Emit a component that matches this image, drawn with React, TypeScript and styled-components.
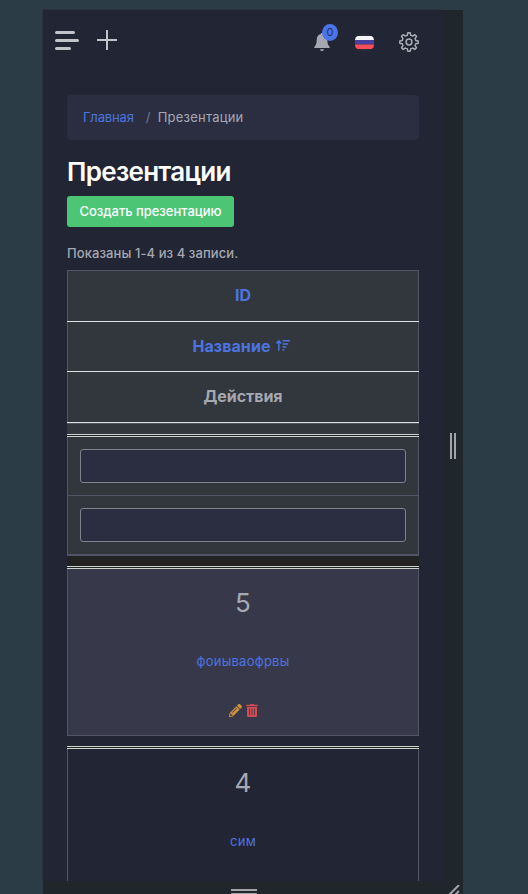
import React from "react";
import styled, { createGlobalStyle, css } from "styled-components";
import { FaPencilAlt } from "react-icons/fa";

const Global = createGlobalStyle`
  * { box-sizing: border-box; }
  html, body { margin: 0; height: 100%; overflow: hidden; background: #2c3c46; }
  body { font-family: Inter, "Open Sans", sans-serif; color: #a5a8b1; font-size: 13px; }
`;

const Stage = styled.div`
  width: 528px;
  height: 894px;
  padding: 10px 0 0 43px;
  overflow: hidden;
  background: #2c3c46;
`;

const Device = styled.div`
  display: grid;
  grid-template: 871px 13px / 400px 20px;
  width: 420px;
`;

const Screen = styled.main`
  overflow: hidden;
  background: #222533;
  box-shadow: 0 0 0 1px #2c3239;
  clip-path: inset(-1px 0 0 -1px);
`;

const SideRail = styled.div`
  display: flex;
  align-items: center;
  justify-content: center;
  background: #1f262c;
`;

const BottomRail = styled.div`
  display: flex;
  justify-content: center;
  padding: 8px 0 0 2px;
  background: #1f262c;
`;

const Corner = styled.div`
  display: flex;
  justify-content: flex-end;
  align-items: flex-end;
  background: #1f262c;
  padding-right: 3px;
`;

const Grip = styled.span<{ $vertical?: boolean }>`
  ${({ $vertical }) =>
    $vertical
      ? css`
          width: 6px;
          height: 26px;
          border-width: 0 2px;
        `
      : css`
          width: 26px;
          height: 6px;
          border-width: 2px 0;
        `}
  border-style: solid;
  border-color: #a4a4a8;
`;

const TopBar = styled.header`
  display: flex;
  align-items: flex-start;
  justify-content: space-between;
  height: 62px;
  padding: 0 24px 0 12px;
`;

const Tools = styled.div<{ $gap: number; $top: number }>`
  display: flex;
  align-items: center;
  gap: ${({ $gap }) => $gap}px;
  padding-top: ${({ $top }) => $top}px;
`;

const BellWrap = styled.span`
  position: relative;
  width: 16px;
  height: 18px;
`;

const Badge = styled.span`
  position: absolute;
  left: 8px;
  top: -9px;
  width: 16px;
  height: 17px;
  border-radius: 50%;
  background: #4c74e6;
  color: #263155;
  font-size: 11px;
  line-height: 17px;
  text-align: center;
`;

const Content = styled.section`
  padding: 23px 24px 0;
`;

const Breadcrumb = styled.nav`
  display: flex;
  align-items: center;
  height: 45px;
  padding: 0 16px 1px;
  border-radius: 4px;
  background: #2b2e41;
  font-size: 13px;
  letter-spacing: 0.22px;
`;

const Slash = styled.span`
  margin: 0 7px 0 12px;
  color: #757987;
`;

const Link = styled.a`
  color: #4c74e0;
`;

const HomeLink = styled(Link)`
  letter-spacing: -0.15px;
`;

const Title = styled.h1`
  margin: 16px 0 8px;
  height: 32px;
  line-height: 32px;
  font-size: 26px;
  font-weight: 600;
  letter-spacing: -0.7px;
  color: #fff;
  white-space: nowrap;
`;

const CreateButton = styled.button`
  display: block;
  width: 167px;
  height: 31px;
  padding: 0 0 1px;
  border: 0;
  border-radius: 3px;
  background: #4cc575;
  color: #fff;
  font: 500 13px Inter, sans-serif;
  letter-spacing: -0.04px;
  white-space: nowrap;
`;

const Summary = styled.p`
  margin: 17px 0 7px;
  height: 19px;
  line-height: 19px;
  font-weight: 500;
  letter-spacing: 0.08px;
`;

const Table = styled.div`
  display: flex;
  flex-direction: column;
`;

const HeadGroup = styled.div`
  height: 154px;
  border: 1px solid #525566;
  background: #32363d;
`;

const HeadCell = styled.div<{ $height: number; $link?: boolean }>`
  display: flex;
  align-items: center;
  justify-content: center;
  gap: 5px;
  height: ${({ $height }) => $height}px;
  margin: 0 -1px;
  padding-bottom: 2px;
  border-bottom: 1px solid #dfe2e2;
  color: ${({ $link }) => ($link ? "#4c74e0" : "#a5a8b1")};
  font-size: 16px;
  font-weight: 700;
  letter-spacing: -0.05px;
`;

const SortedCell = styled(HeadCell)`
  padding-right: 4px;
  letter-spacing: 0.06px;
`;

const Gap = styled.div<{ $tone: string }>`
  height: 10px;
  background: ${({ $tone }) => $tone};
`;

const DoubleRule = styled.div`
  height: 3px;
  border: solid #cdd2cc;
  border-width: 1px 0;
  background: #1f2428;
`;

const FilterGroup = styled.div`
  height: 119px;
  border: solid #525566;
  border-width: 0 1px 2px;
  background: #32363d;
`;

const FilterRow = styled.div<{ $last?: boolean }>`
  padding: 12px;
  height: ${({ $last }) => ($last ? 58 : 59)}px;
  border-bottom: ${({ $last }) => ($last ? 0 : 1)}px solid #525566;
`;

const FilterInput = styled.input`
  display: block;
  width: 326px;
  height: 34px;
  border: 1px solid #80838b;
  border-radius: 3px;
  background: #2b2e41;
`;

const Record = styled.article<{ $striped?: boolean }>`
  display: flex;
  flex-direction: column;
  align-items: center;
  height: 167px;
  border: solid #525566;
  border-width: 0 1px 1px;
  background: ${({ $striped }) => ($striped ? "#37394b" : "#222533")};
`;

const RecordId = styled.div`
  height: 68px;
  line-height: 68px;
  font-size: 26px;
`;

const RecordName = styled(Link)`
  height: 49px;
  line-height: 49px;
  font-size: 13px;
  letter-spacing: 0.25px;
`;

const Actions = styled.div`
  display: flex;
  align-items: center;
  gap: 4px;
  height: 48px;
`;

function MenuIcon() {
  return (
    <svg width="24" height="20" viewBox="0 0 24 20" stroke="#c3c4c9" strokeWidth="3" strokeLinecap="round">
      <path d="M1.5 2.5h17M1.5 10.5h21M1.5 18.5h13" />
    </svg>
  );
}

function PlusIcon() {
  return (
    <svg width="20" height="20" viewBox="0 0 20 20" stroke="#c3c4c9" strokeWidth="2">
      <path d="M10 0v20M0 10h20" />
    </svg>
  );
}

function BellIcon() {
  return (
    <svg width="16" height="18" viewBox="0 0 16 18" fill="#a5a8b1">
      <path d="M8 0c-.7 0-1.2.5-1.2 1.1C4 1.7 2.8 4 2.7 7c-.1 3.600-.8 5.300-2.200 6.800-.5.600-.3 1.300.5 1.300h14c.8 0 1-.7.500-1.300C14.100 12.300 13.400 10.600 13.300 7c-.1-3-1.300-5.300-4.100-5.900C9.200.5 8.700 0 8 0zM6 16.200h4c0 1-.9 1.800-2 1.800s-2-.8-2-1.800z" />
    </svg>
  );
}

function FlagIcon() {
  return (
    <svg width="19" height="19" viewBox="0 0 19 19">
      <circle cx="9.500" cy="9.500" r="9.500" fill="#2a2c3d" />
      <path d="M2.500 3h14Q19 4 19 7H0Q0 4 2.500 3z" fill="#f4f3f5" />
      <path d="M0 7h19v4.500H0z" fill="#49409e" />
      <path d="M0 11.500h19Q19 15 16.500 16h-14Q0 15 0 11.500z" fill="#fa4d57" />
    </svg>
  );
}

function GearIcon() {
  return (
    <svg width="20" height="20" viewBox="0 0 20 20" fill="none" stroke="#a9acb4" strokeWidth="1.500" strokeLinejoin="round">
      <circle cx="10" cy="10" r="2.900" />
      <path d="M8.800.8h2.400l.5 2.500q1 .2 1.900.8l2.200-1.400 1.700 1.700-1.500 2.200q.6.900.8 1.900l2.400.4v2.300l-2.400.5q-.2 1-.8 1.900l1.500 2.100-1.700 1.700-2.200-1.400q-.9.600-1.900.8l-.5 2.400H8.800l-.5-2.400q-1-.2-1.900-.8l-2.200 1.400-1.700-1.700L4 13.600q-.6-.9-.8-1.900L.8 11.200V8.900l2.400-.4q.2-1 .8-1.900L2.500 4.400l1.700-1.700 2.200 1.400q.9-.6 1.900-.8z" />
    </svg>
  );
}

function SortIcon() {
  return (
    <svg width="14" height="13" viewBox="0 0 15 13" fill="none" stroke="#4c74e0" strokeWidth="1.600">
      <path d="M3 12V2M.5 4.300L3 1.500l2.500 2.800M7 1.500h8M7 4.800h6M7 8h4M7 11.300h2" />
    </svg>
  );
}

function TrashIcon() {
  return (
    <svg width="12" height="13" viewBox="0 0 12 13" fill="#d34b50">
      <path d="M.3.800h3.500L4.500 0h3l.7.800h3.500v1.500H.3z" />
      <path fillRule="evenodd" d="M1 3h10v8.800q0 1.200-1.200 1.200H2.200Q1 13 1 11.800zM3.200 4.500V11h.8V4.500zM5.600 4.500V11h.8V4.500zM8 4.500V11h.8V4.500z" />
    </svg>
  );
}

function ResizeIcon() {
  return (
    <svg width="14" height="9" viewBox="0 0 14 9" stroke="#a4a4a8" strokeWidth="2">
      <path d="M3 10L13 0M9 10l4-4" />
    </svg>
  );
}

export default function App() {
  return (
    <>
      <Global />
      <Stage>
        <Device>
          <Screen>
            <TopBar>
              <Tools $gap={18} $top={20}>
                <MenuIcon />
                <PlusIcon />
              </Tools>
              <Tools $gap={25} $top={22}>
                <BellWrap>
                  <BellIcon />
                  <Badge>0</Badge>
                </BellWrap>
                <FlagIcon />
                <GearIcon />
              </Tools>
            </TopBar>
            <Content>
              <Breadcrumb>
                <HomeLink>Главная</HomeLink>
                <Slash>/</Slash>
                <span>Презентации</span>
              </Breadcrumb>
              <Title>Презентации</Title>
              <CreateButton>Создать презентацию</CreateButton>
              <Summary>Показаны 1-4 из 4 записи.</Summary>
              <Table>
                <HeadGroup>
                  <HeadCell $height={51} $link>ID</HeadCell>
                  <SortedCell $height={50} $link>
                    Название <SortIcon />
                  </SortedCell>
                  <HeadCell $height={51}>Действия</HeadCell>
                </HeadGroup>
                <Gap $tone="#32363d" />
                <DoubleRule />
                <FilterGroup>
                  <FilterRow>
                    <FilterInput />
                  </FilterRow>
                  <FilterRow $last>
                    <FilterInput />
                  </FilterRow>
                </FilterGroup>
                <Gap $tone="#222222" />
                <DoubleRule />
                <Record $striped>
                  <RecordId>5</RecordId>
                  <RecordName>фоиываофрвы</RecordName>
                  <Actions>
                    <FaPencilAlt size={13} color="#d1913b" />
                    <TrashIcon />
                  </Actions>
                </Record>
                <Gap $tone="#222533" />
                <DoubleRule />
                <Record>
                  <RecordId>4</RecordId>
                  <RecordName>сим</RecordName>
                </Record>
              </Table>
            </Content>
          </Screen>
          <SideRail>
            <Grip $vertical />
          </SideRail>
          <BottomRail>
            <Grip />
          </BottomRail>
          <Corner>
            <ResizeIcon />
          </Corner>
        </Device>
      </Stage>
    </>
  );
}
